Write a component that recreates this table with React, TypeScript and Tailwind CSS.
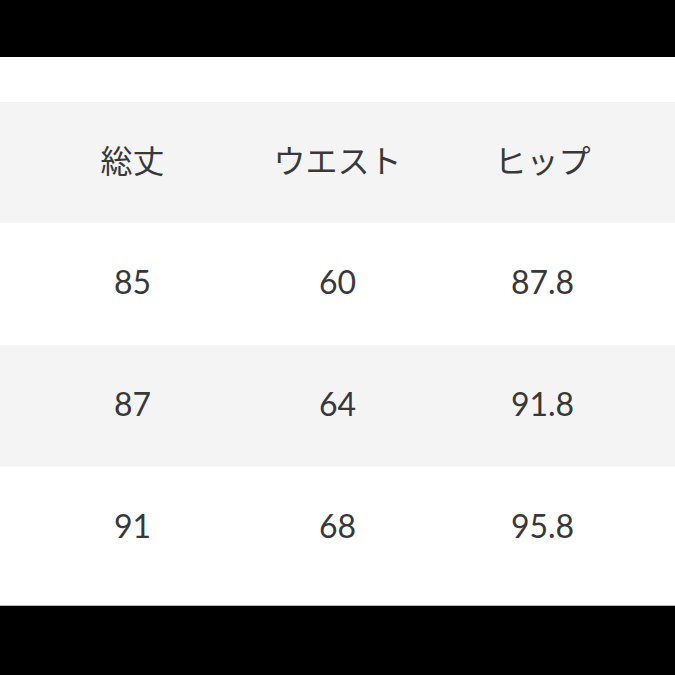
const header = ['総丈', 'ウエスト', 'ヒップ'];
const rows = [
  ['85', '60', '87.8'],
  ['87', '64', '91.8'],
  ['91', '68', '95.8'],
];

export default function App() {
  return (
    <div
      className="w-[675px] h-[675px] bg-black flex flex-col text-[#383838]"
      style={{ fontFamily: 'Lato, "Noto Sans CJK JP", sans-serif' }}
    >
      <div className="h-[57px]" />
      <div className="flex-1 bg-white flex flex-col pt-[45px]">
        <div className="h-[121px] bg-[#f4f4f4] grid grid-cols-3 items-center px-[30px] pb-[3px] text-[32px] leading-none">
          {header.map((h) => (
            <div key={h} className="text-center">{h}</div>
          ))}
        </div>
        {rows.map((r, i) => (
          <div
            key={i}
            className={
              'h-[122px] grid grid-cols-3 items-center px-[30px] pb-[5px] text-[32px] leading-none ' +
              (i === 1 ? 'bg-[#f4f4f4]' : 'bg-white')
            }
          >
            {r.map((c, j) => (
              <div key={j} className="text-center">{c}</div>
            ))}
          </div>
        ))}
      </div>
      <div className="h-[70px] border-t border-[#bbb]" />
    </div>
  );
}
